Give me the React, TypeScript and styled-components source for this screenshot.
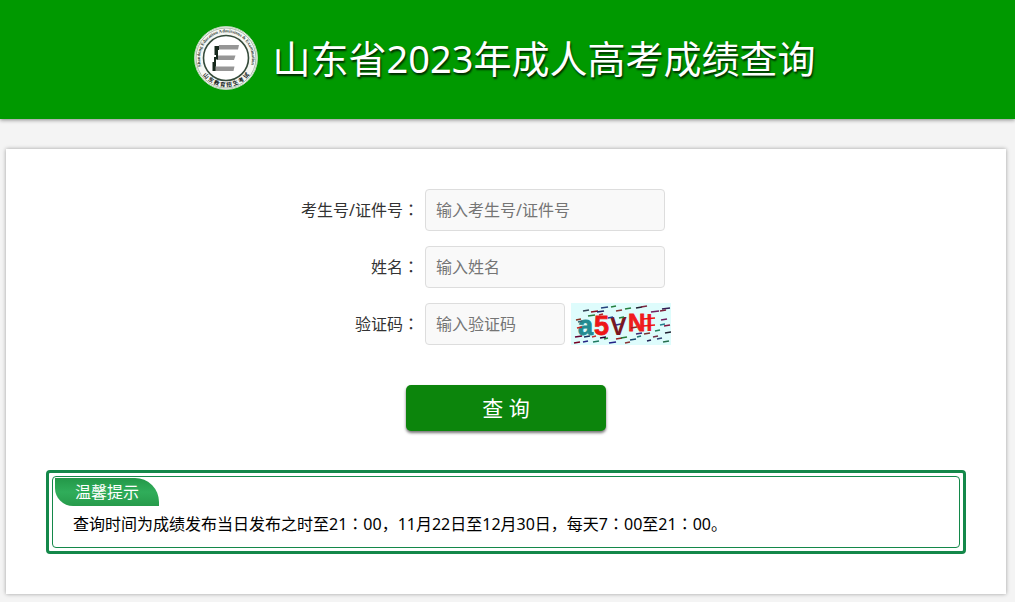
import React from "react";
import styled, { createGlobalStyle } from "styled-components";

const latinCjk = `"Noto Sans", "Noto Sans CJK SC", sans-serif`;

const GlobalStyle = createGlobalStyle`
  * { box-sizing: border-box; }
  body {
    margin: 0;
    background: #f4f4f4;
    color: #333;
    font-family: ${latinCjk};
    font-size: 16px;
    line-height: 24px;
  }
`;

const Header = styled.header`
  display: flex;
  align-items: center;
  justify-content: center;
  gap: 15px;
  min-height: 119px;
  padding: 0 6px 3px 0;
  background: #009900;
  box-shadow: 0 1px 4px rgba(0, 0, 0, 0.45);
`;

const Logo = styled.svg`
  flex: none;
  width: 64px;
  height: 64px;
`;

const Title = styled.h1`
  margin: 0;
  color: #fff;
  font-size: 38px;
  font-weight: 400;
  line-height: 56px;
  text-shadow: 1px 2px 2px rgba(0, 0, 0, 0.75);
`;

const Main = styled.main`
  padding: 30px 9px 8px 6px;
`;

const Card = styled.section`
  max-width: 1000px;
  margin: 0 auto;
  padding: 40px;
  background: #fff;
  box-shadow: 0 0 4px rgba(0, 0, 0, 0.35);
`;

const Form = styled.form`
  display: flex;
  flex-direction: column;
  align-items: center;
  gap: 40px;
`;

const Fields = styled.div`
  display: flex;
  flex-direction: column;
  gap: 15px;
  width: 100%;
`;

const Row = styled.div`
  display: grid;
  grid-template-columns: 373fr 541fr;
  align-items: center;
  column-gap: 6px;
`;

const Label = styled.label`
  text-align: right;
  white-space: nowrap;
`;

const Colon = styled.span`
  font-family: "Noto Sans CJK JP", sans-serif;
  line-height: 1;
`;

const Controls = styled.div`
  display: flex;
  gap: 6px;
`;

const TextBox = styled.input<{ $short?: boolean }>`
  width: ${(p) => (p.$short ? 140 : 240)}px;
  height: 42px;
  padding: 0 10px;
  border: 1px solid #ddd;
  border-radius: 4px;
  background: #f9f9f9;
  color: #333;
  font: inherit;
  &::placeholder {
    color: #757575;
    opacity: 1;
  }
`;

const Captcha = styled.svg`
  width: 100px;
  height: 42px;
`;

const Submit = styled.button`
  width: 200px;
  height: 46px;
  border: 0;
  border-radius: 5px;
  background: #0c850c;
  box-shadow: 0 2px 3px rgba(0, 0, 0, 0.55);
  color: #fff;
  font-family: inherit;
  font-size: 21px;
  line-height: 44px;
`;

const Notice = styled.aside`
  margin-top: 39px;
  padding: 3px;
  border: 3px solid #14884a;
  border-radius: 4px;
`;

const NoticeInner = styled.div`
  min-height: 72px;
  padding: 1px 2px 10px;
  border: 1px solid #14884a;
  border-radius: 4px;
  color: #000;
`;

const NoticeTitle = styled.h2`
  width: 104px;
  margin: 0;
  border-radius: 0 24px 0 18px;
  background: linear-gradient(#239748, #30ad5a 50%, #279b4b);
  color: #fff;
  font-size: 16px;
  font-weight: 400;
  line-height: 28px;
  text-align: center;
`;

const NoticeText = styled.p`
  margin: 6px 18px 0;
`;

const noise: [number, number, number, string][] = [
  [30, 5, 7, "#24447e"], [40, 4, 5, "#267f3e"], [12, 8, 6, "#345"], [20, 9, 7, "#812"],
  [26, 9, 7, "#242464"], [45, 8, 6, "#833"], [54, 6, 6, "#267f3e"], [65, 5, 6, "#223"],
  [70, 4, 6, "#7b2842"], [80, 9, 8, "#702060"], [91, 6, 8, "#302054"], [89, 8, 6, "#80203b"],
  [17, 13, 7, "#287c3e"], [28, 12, 4, "#b12828"], [5, 17, 5, "#832"], [7, 19, 4, "#367"],
  [37, 15, 5, "#223c86"], [48, 15, 5, "#267f3e"], [90, 17, 6, "#702060"], [89, 22, 5, "#267f8e"],
  [93, 23, 6, "#801640"], [6, 25, 5, "#c72828"], [45, 22, 5, "#303080"], [60, 25, 6, "#922"],
  [72, 16, 12, "#e11"], [72, 23, 12, "#e11"], [84, 28, 5, "#267f5e"], [94, 30, 6, "#223"],
  [4, 34, 7, "#603"], [13, 34, 6, "#18355e"], [21, 34, 4, "#b33"], [29, 35, 6, "#203"],
  [33, 36, 4, "#267f3e"], [45, 36, 6, "#922"], [50, 35, 6, "#267f3e"], [65, 31, 6, "#3d2674"],
  [73, 31, 6, "#733"], [59, 37, 6, "#184a70"], [82, 34, 5, "#703048"], [86, 36, 5, "#347"],
  [92, 39, 6, "#266f4e"], [76, 38, 4, "#225"], [3, 40, 6, "#702"], [12, 39, 5, "#262684"],
  [22, 39, 6, "#1f7a60"], [38, 40, 7, "#228"], [54, 40, 5, "#833"], [66, 34, 4, "#277"],
];

function Emblem() {
  return (
    <Logo viewBox="0 0 64 64" role="img" aria-label="山东教育招生考试">
      <defs>
        <path id="arcTop" d="M12.5 49.5A26 26 0 1 1 51.5 49.5" transform="rotate(-2 32 32)" />
        <path id="arcBottom" d="M3.5 36A28.8 28.8 0 0 0 60.5 36" />
      </defs>
      <circle cx="32" cy="32" r="31.5" fill="#f5f7f3" stroke="#b9d5b7" />
      <circle cx="32" cy="32" r="30" fill="none" stroke="#8b9f8b" strokeWidth="0.7" />
      <circle cx="32" cy="32" r="22.5" fill="#fff" stroke="#354b3b" strokeWidth="1.6" />
      <text fill="#344238" fontSize="4.6" fontWeight="700" fontFamily="Liberation Serif, serif">
        <textPath href="#arcTop" startOffset="50%" textAnchor="middle">
          Shandong Education Admissions &amp; Examination
        </textPath>
      </text>
      <text fill="#17251c" fontSize="5.6" fontWeight="700" fontFamily="Noto Sans CJK SC, sans-serif">
        <textPath href="#arcBottom" startOffset="50%" textAnchor="middle">
          山 东 教 育 招 生 考 试
        </textPath>
      </text>
      <path d="M25 19H45L44 23.500H24ZM23.500 29.500H41.500L40 34H23ZM21 40.500H40.500L39.500 45H20Z" fill="#969696" />
      <path d="M20.500 20H25V24H24V33.500H22V40.500H21.500V45H18.500V36H20V31H22V29H20.500Z" fill="#17291d" />
    </Logo>
  );
}

function CaptchaImage() {
  return (
    <Captcha viewBox="0 0 100 42" role="img" aria-label="验证码图片">
      <rect width="100" height="42" fill="#defcfc" />
      <g fontFamily="Liberation Sans, sans-serif" fontWeight="700" strokeWidth="0.8">
        <text x="7" y="32" fontSize="27" fill="#238b91" stroke="#238b91">a</text>
        <text x="23" y="32" fontSize="27" fill="#ed1717" stroke="#ed1717">5</text>
        <text x="39" y="32" fontSize="25" fill="#7b1720">V</text>
        <text x="57" y="28" fontSize="24" fill="#f01b20" stroke="#f01b20">N</text>
        <text x="75" y="28" fontSize="24" fill="#f01b20">I</text>
      </g>
      {noise.map(([x, y, length, color], i) => (
        <path key={i} d={`M${x} ${y}l${length} -1`} stroke={color} strokeWidth="1.6" />
      ))}
    </Captcha>
  );
}

function Field({ id, label, short, children }: {
  id: string;
  label: string;
  short?: boolean;
  children?: React.ReactNode;
}) {
  return (
    <Row>
      <Label htmlFor={id}>{label}<Colon>：</Colon></Label>
      <Controls>
        <TextBox id={id} name={id} type="text" placeholder={`输入${label}`} $short={short} />
        {children}
      </Controls>
    </Row>
  );
}

export default function App() {
  return (
    <>
      <GlobalStyle />
      <Header>
        <Emblem />
        <Title>山东省2023年成人高考成绩查询</Title>
      </Header>
      <Main>
        <Card>
          <Form onSubmit={(e) => e.preventDefault()}>
            <Fields>
              <Field id="candidate" label="考生号/证件号" />
              <Field id="fullname" label="姓名" />
              <Field id="code" label="验证码" short>
                <CaptchaImage />
              </Field>
            </Fields>
            <Submit type="submit">查 询</Submit>
          </Form>
          <Notice>
            <NoticeInner>
              <NoticeTitle>温馨提示</NoticeTitle>
              <NoticeText>
                查询时间为成绩发布当日发布之时至21<Colon>：</Colon>00，11月22日至12月30日，每天7<Colon>：</Colon>00至21<Colon>：</Colon>00。
              </NoticeText>
            </NoticeInner>
          </Notice>
        </Card>
      </Main>
    </>
  );
}
